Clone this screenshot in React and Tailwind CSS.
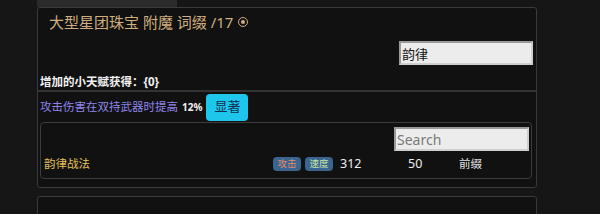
import React from 'react';

const cjk = { fontFamily: '"Noto Sans", "Noto Sans CJK SC", sans-serif' };

const Tag = ({ label, color }) => (
  <span className={`inline-flex items-center justify-center w-[28px] h-[14px] rounded-[4px] bg-[#3a6591] text-[9.5px] leading-none ${color}`}>
    {label}
  </span>
);

export default function App() {
  return (
    <div className="min-h-[214px] bg-[#161616] overflow-hidden" style={cjk}>
      <div className="ml-[37px] w-[500px]">
        {/* previous element edge */}
        <div className="h-[7px] w-[140px] bg-[#2b2b2b]"></div>

        <div className="border border-[#3a3a3a] rounded-[3px] bg-[#111111]">
          {/* header */}
          <div className="border-b-2 border-[#333333]">
            <div className="h-[28px] flex items-center pl-[11px] text-[15px] text-[#cfae7f]">
              <span>大型星团珠宝 附魔 词缀 /17</span>
              <span className="ml-[5px] inline-flex items-center justify-center w-[10px] h-[10px] rounded-full border border-[#cfae7f]">
                <span className="w-[4px] h-[4px] rounded-full bg-[#cfae7f]"></span>
              </span>
            </div>
            <div className="flex justify-end pr-[3px] pt-[5px]">
              <input
                readOnly
                value="韵律"
                className="w-[134px] h-[24px] bg-[#ececec] border-2 border-t-[#9a9a9a] border-l-[#9a9a9a] border-b-[#cfcfcf] border-r-[#cfcfcf] px-[1px] text-[13px] text-[#111] outline-none"
              />
            </div>
            <div className="pl-[2px] h-[25px] text-[11.5px] font-bold text-[#f2f2f2] leading-[16px] flex items-end">
              增加的小天赋获得：{'{0}'}
            </div>
          </div>

          {/* stat row */}
          <div className="flex items-center h-[30px] pl-[2px]">
            <span className="text-[11.5px] text-[#8d85ea]">攻击伤害在双持武器时提高</span>
            <span className="ml-[4px] text-[10px] font-bold text-[#f0f0f0]">12%</span>
            <div className="ml-[4px] w-[42px] h-[27px] rounded-[4px] bg-[#1fc6ec] flex items-center justify-center text-[13px] text-[#0f2f52]">
              显著
            </div>
          </div>

          {/* results */}
          <div className="ml-[2px] mr-[4px] mb-[8px] border border-[#3c3c3c] rounded-[4px] h-[57px] flex flex-col">
            <div className="flex justify-end pr-[2px] pt-[4px]">
              <input
                readOnly
                placeholder="Search"
                className="w-[135px] h-[24px] bg-[#ececec] border-2 border-t-[#9a9a9a] border-l-[#9a9a9a] border-b-[#cfcfcf] border-r-[#cfcfcf] px-[1px] text-[14px] text-[#111] placeholder-[#7a7a7a] outline-none"
              />
            </div>
            <div className="flex items-center h-[26px] pl-[3px] text-[11.5px]">
              <span className="w-[229px] text-[#e3c35a]">韵律战法</span>
              <div className="flex gap-[4px] w-[67px]">
                <Tag label="攻击" color="text-[#e38a66]" />
                <Tag label="速度" color="text-[#c6e6a4]" />
              </div>
              <span className="w-[68px] text-[12.5px] text-[#eeeeee]">312</span>
              <span className="w-[51px] text-[12.5px] text-[#eeeeee]">50</span>
              <span className="text-[#e4e4e4]">前缀</span>
            </div>
          </div>
        </div>

        <div className="mt-[8px] h-[30px] border border-[#3a3a3a] rounded-[3px] bg-[#111111]"></div>
      </div>
    </div>
  );
}
